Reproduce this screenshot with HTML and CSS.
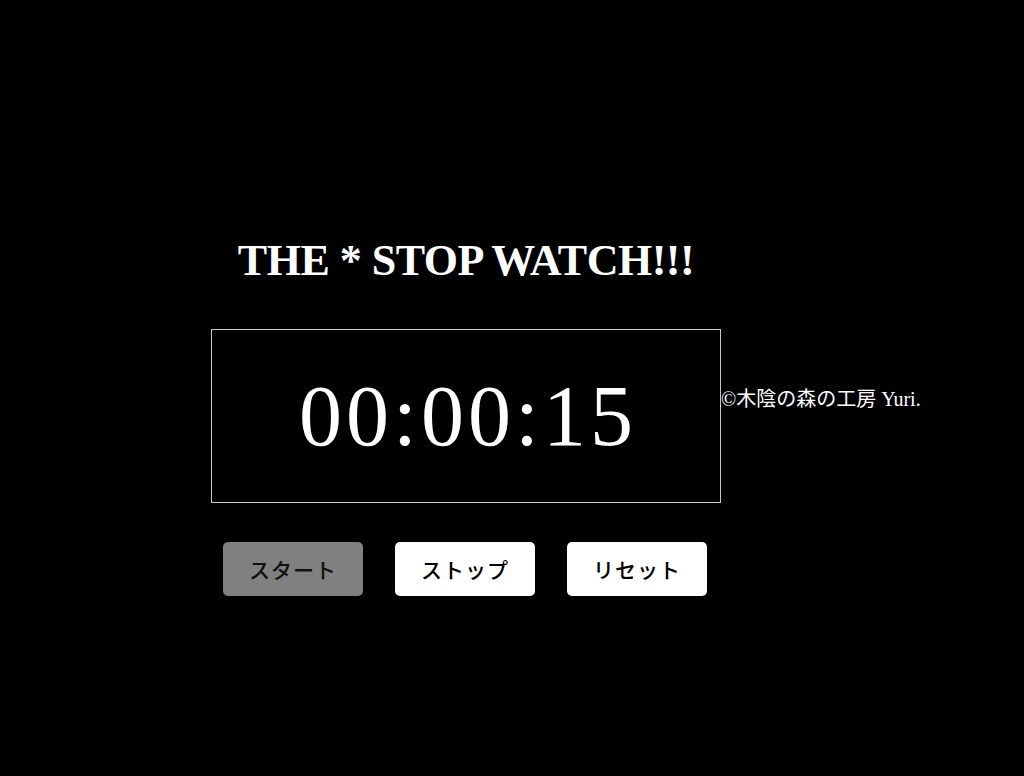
FILE: index.html
```html
<!DOCTYPE html>
<html lang="ja">
<head>
<meta charset="utf-8">
<title>THE * STOP WATCH!!!</title>
<link rel="stylesheet" href="styles.css">
</head>
<body>
<main class="stage">
  <div class="column">
    <h1 class="title">THE * STOP WATCH!!!</h1>
    <div class="timer-row">
      <div class="timer-box"><span class="time">00:00:15</span></div>
      <p class="copy">©木陰の森の工房 Yuri.</p>
    </div>
    <div class="buttons">
      <button class="btn btn-disabled">スタート</button>
      <button class="btn">ストップ</button>
      <button class="btn">リセット</button>
    </div>
  </div>
</main>
</body>
</html>
```
FILE: styles.css
```css
html, body {
  margin: 0;
  padding: 0;
  background: #000;
  height: 100%;
}
body {
  font-family: "Liberation Serif", "Noto Sans CJK JP", serif;
  color: #fff;
}
.stage {
  padding-top: 234px;
  padding-left: 211px;
}
.column {
  width: 510px;
  display: flex;
  flex-direction: column;
}
.title {
  margin: 0 0 42px 0;
  font-size: 44px;
  line-height: 53px;
  font-weight: bold;
  text-align: center;
  letter-spacing: -0.5px;
}
.timer-row {
  display: flex;
  align-items: center;
  width: 510px;
}
.timer-box {
  flex: 0 0 auto;
  box-sizing: border-box;
  width: 510px;
  height: 174px;
  border: 1px solid #c8c8c8;
  display: flex;
  align-items: center;
  justify-content: center;
}
.time {
  font-size: 86px;
  line-height: 1;
  letter-spacing: 4px;
  padding-left: 4px;
}
.copy {
  flex: 0 0 auto;
  margin: 0 0 34px 0;
  font-size: 20px;
  line-height: 22px;
  white-space: nowrap;
}
.buttons {
  margin-top: 39px;
  display: flex;
  justify-content: center;
  gap: 32px;
  padding-right: 2px;
}
.btn {
  width: 140px;
  height: 54px;
  border: none;
  border-radius: 5px;
  background: #fff;
  color: #000;
  font-family: "Noto Sans CJK JP", sans-serif;
  font-weight: 500;
  font-size: 21px;
  letter-spacing: 1px;
  padding: 0;
}
.btn-disabled {
  background: #808080;
  color: #111;
}
```
